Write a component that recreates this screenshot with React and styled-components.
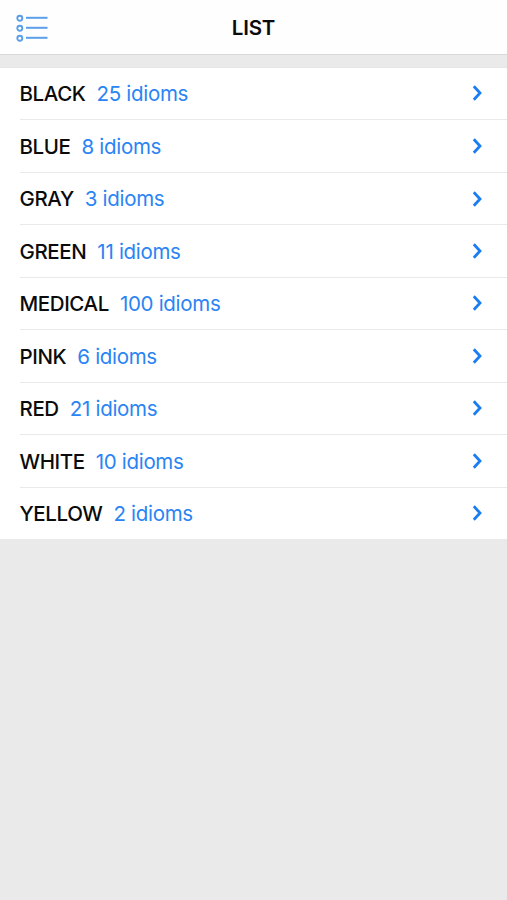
import React from 'react'
import styled, { createGlobalStyle } from 'styled-components'

const blue = '#1a7df0'

const GlobalStyle = createGlobalStyle`
  body {
    margin: 0;
    background: #eaeaea;
    font-family: Inter, 'Liberation Sans', sans-serif;
  }
`

const Page = styled.div`
  min-height: 100vh;
  background: #eaeaea;
`

const Header = styled.header`
  display: grid;
  grid-template-columns: 64px 1fr 64px;
  align-items: center;
  box-sizing: border-box;
  height: 55px;
  background: #fefefe;
  border-bottom: 1px solid #d9d9d9;
`

const Title = styled.h1`
  margin: 0;
  padding-top: 2px;
  color: #0b0b0b;
  font-size: 20.5px;
  font-weight: 600;
  letter-spacing: -0.2px;
  line-height: 52px;
  text-align: center;
`

const MenuButton = styled.button`
  display: flex;
  padding: 2px 0 0 16px;
  border: 0;
  background: none;
`

const List = styled.ul`
  margin: 12px 0 0;
  padding: 0;
  list-style: none;
  background: #fff;
  box-shadow: inset 0 1px #e6e6e6;
`

const Row = styled.li`
  display: flex;
  align-items: center;
  box-sizing: border-box;
  height: 52.45px;
  margin-left: 20px;
  padding-right: 24px;
  font-size: 20.5px;
  line-height: 26px;

  & + & {
    border-top: 1px solid #e9e9e9;
  }
`

const Name = styled.span`
  margin-left: -0.5px;
  padding-top: 1.6px;
  color: #0b0b0b;
  font-weight: 500;
  letter-spacing: -0.4px;
`

const Count = styled.span`
  flex: 1;
  margin-left: 11px;
  padding-top: 1.6px;
  color: #2a84f3;
  letter-spacing: -0.3px;
`

const ListIcon = () => (
  <svg width="33" height="28" viewBox="0 0 33 28" fill="none" stroke="#5a9fe8">
    {[4, 14, 24].map(y => (
      <g key={y}>
        <circle cx="3.8" cy={y + 0.2} r="2.5" strokeWidth="1.9" />
        <path d={`M10 ${y - 0.2}H31.5`} strokeWidth="2" />
      </g>
    ))}
  </svg>
)

const Chevron = () => (
  <svg width="12" height="18" viewBox="0 0 12 18" fill="none">
    <path d="M2.8 2.3L9 9L2.8 15.7" stroke={blue} strokeWidth="2.8" />
  </svg>
)

const categories = [
  { name: 'BLACK', count: 25 },
  { name: 'BLUE', count: 8 },
  { name: 'GRAY', count: 3 },
  { name: 'GREEN', count: 11 },
  { name: 'MEDICAL', count: 100 },
  { name: 'PINK', count: 6 },
  { name: 'RED', count: 21 },
  { name: 'WHITE', count: 10 },
  { name: 'YELLOW', count: 2 },
]

const App = () => (
  <Page>
    <GlobalStyle />
    <Header>
      <MenuButton aria-label="Menu">
        <ListIcon />
      </MenuButton>
      <Title>LIST</Title>
    </Header>
    <List>
      {categories.map(({ name, count }) => (
        <Row key={name}>
          <Name>{name}</Name>
          <Count>{count} idioms</Count>
          <Chevron />
        </Row>
      ))}
    </List>
  </Page>
)

export default App
